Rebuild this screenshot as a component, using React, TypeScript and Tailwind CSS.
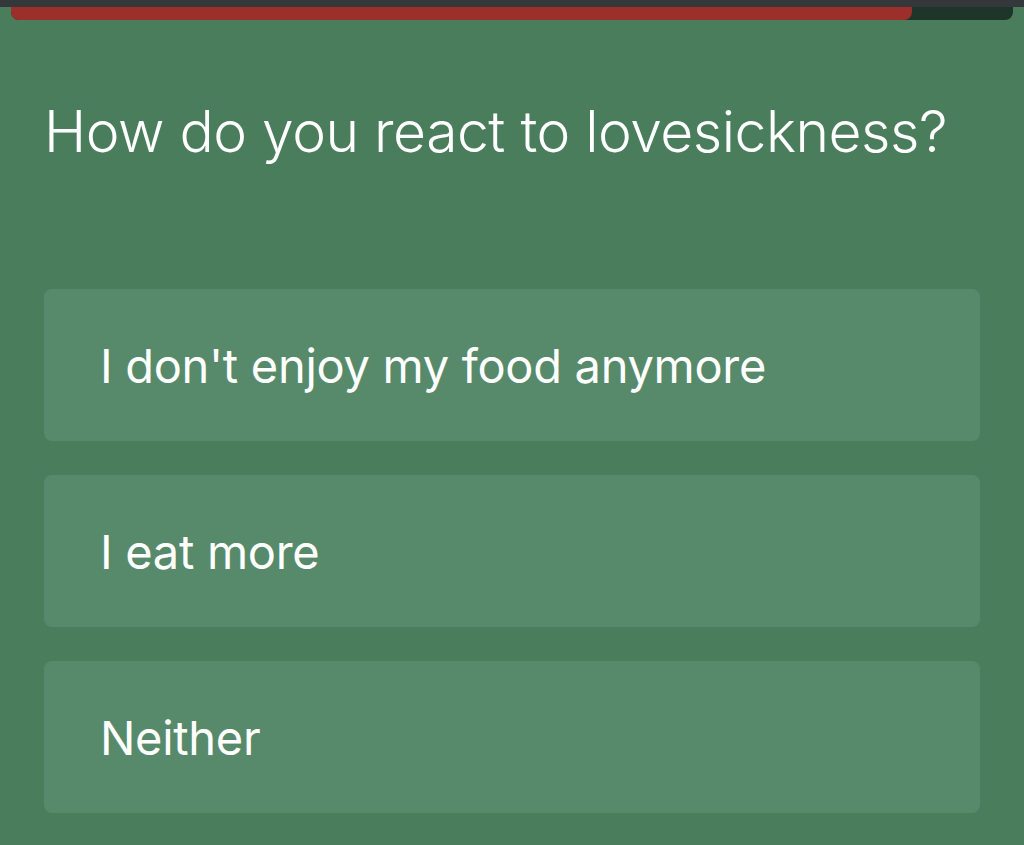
export default function App() {
  const options = ["I don't enjoy my food anymore", 'I eat more', 'Neither'];
  return (
    <div className="min-h-[845px] w-[1024px] bg-[#4a7d5c] font-['Inter','Liberation_Sans',sans-serif] text-white">
      {/* top chrome + progress */}
      <div className="h-[7px] bg-[#35383a]" />
      <div className="mx-[11px] h-[13px] overflow-hidden rounded-b-[8px] bg-[#1f3529]">
        <div className="h-full w-[901px] rounded-br-[8px] bg-[#9c2f29]" />
      </div>

      <h1 className="mt-[83px] pl-[44px] text-[57px] font-light leading-none tracking-[-0.5px]">
        How do you react to lovesickness?
      </h1>

      <div className="mt-[129px] flex flex-col gap-[34px] pl-[44px] pr-[44px]">
        {options.map((o) => (
          <button
            key={o}
            className="flex h-[152px] items-center rounded-[8px] bg-[#578a6b] pl-[56px] text-left text-[47px] font-normal leading-none tracking-[-0.3px]"
          >
            {o}
          </button>
        ))}
      </div>
    </div>
  );
}
